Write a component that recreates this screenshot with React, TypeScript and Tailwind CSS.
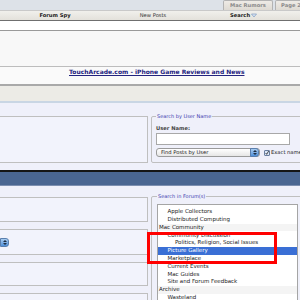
import React from 'react';

const forums: { label: string; level: 0 | 1 | 2; selected?: boolean }[] = [
  { label: 'Apple Collectors', level: 1 },
  { label: 'Distributed Computing', level: 1 },
  { label: 'Mac Community', level: 0 },
  { label: 'Community Discussion', level: 1 },
  { label: 'Politics, Religion, Social Issues', level: 2 },
  { label: 'Picture Gallery', level: 1, selected: true },
  { label: 'Marketplace', level: 1 },
  { label: 'Current Events', level: 1 },
  { label: 'Mac Guides', level: 1 },
  { label: 'Site and Forum Feedback', level: 1 },
  { label: 'Archive', level: 0 },
  { label: 'Wasteland', level: 1 },
];

const Stepper = () => (
  <div className="w-[9px] h-[9px] rounded-r-[3px] bg-gradient-to-b from-[#a9cdf2] to-[#4f8fd8] border border-[#5a7fae] flex flex-col items-center justify-center gap-[1px]">
    <span className="w-0 h-0 border-l-[2px] border-r-[2px] border-b-[2px] border-l-transparent border-r-transparent border-b-[#1b2b40]" />
    <span className="w-0 h-0 border-l-[2px] border-r-[2px] border-t-[2px] border-l-transparent border-r-transparent border-t-[#1b2b40]" />
  </div>
);

const App: React.FC = () => {
  return (
    <div className="relative w-[300px] h-[300px] overflow-hidden bg-[#eff0fa] font-['DejaVu_Sans',Verdana,sans-serif] text-[#1a1a1a]">
      {/* tab strip */}
      <div className="h-[10px] bg-[#dde2e8] flex items-end pl-[223px] gap-[2px]">
        <div className="w-[50px] h-[10px] shrink-0 rounded-t-[2px] border border-b-0 border-[#b3b3b3] bg-gradient-to-b from-[#eeebe6] to-[#dedad3] flex items-center justify-center text-[5.2px] font-bold text-[#8a8a8a] leading-none">Mac Rumors</div>
        <div className="w-[50px] h-[10px] shrink-0 rounded-t-[2px] border border-b-0 border-[#b3b3b3] bg-gradient-to-b from-[#eeebe6] to-[#dedad3] flex items-center pl-[5px] text-[5.2px] font-bold text-[#8a8a8a] leading-none">Page 2</div>
      </div>

      {/* nav bar */}
      <div className="h-[11px] bg-gradient-to-b from-[#f1f0ec] to-[#e3e1db] border-t border-[#c9c9c9] border-b border-b-[#6f6f6f] flex items-center text-[5.2px] leading-none">
        <span className="w-[110px] text-center font-bold">Forum Spy</span>
        <span className="w-[86px] text-center text-[#333]">New Posts</span>
        <span className="pl-[34px] font-bold flex items-center gap-[1px]">
          Search
          <svg width="6" height="5" viewBox="0 0 6 5"><path d="M0.5 1 L5.5 1 L3 4 Z" fill="#dbe6f5" stroke="#6f8fba" strokeWidth="0.6" /></svg>
        </span>
      </div>

      {/* header area */}
      <div className="h-[10px] bg-white border-b border-[#9a9a9a]" />
      <div className="h-[36px] bg-[#f8f8f8] border-b border-[#bdbdbd]" />
      <div className="h-[19px] bg-[#fafafa] border-b-2 border-[#a9a9a9] pl-[69px] pt-[2px] text-[6px] leading-none">
        <span className="font-bold text-[#23237f] underline">TouchArcade.com - iPhone Game Reviews and News</span>
      </div>
      <div className="h-[17px] bg-[#ecebe6] border-b-2 border-[#c9d6e4]" />

      {/* upper search panels */}
      <div className="pt-[13px] flex gap-[3px] h-[60px]">
        <div className="w-[148px] shrink-0 h-[47px] border border-l-0 border-[#bfbfbf] bg-[#f2f3fc]" />
        <fieldset className="w-[170px] shrink-0 h-[49px] border border-[#bfbfbf] rounded-[2px] px-[4px] -mt-[2px]">
          <legend className="text-[5px] text-[#3a3aae] px-[1px] leading-none">Search by User Name</legend>
          <div className="text-[5.2px] font-bold text-[#444] leading-none mt-[7px]">User Name:</div>
          <div className="mt-[2px] w-[134px] h-[12px] bg-white border border-[#a8a8a8]" />
          <div className="mt-[3px] flex items-center gap-[4px]">
            <div className="w-[104px] h-[9px] flex items-center rounded-[3px] border border-[#9a9a9a] bg-gradient-to-b from-white to-[#e6e6e6]">
              <span className="flex-1 pl-[4px] text-[5.2px] leading-none">Find Posts by User</span>
              <Stepper />
            </div>
            <div className="flex items-center gap-[1px]">
              <div className="w-[6px] h-[6px] border border-[#6a7fa0] bg-[#dbe7f7] rounded-[1px] flex items-center justify-center">
                <svg width="6" height="6" viewBox="0 0 6 6"><path d="M1 3 L2.5 5 L5.5 0" fill="none" stroke="#111" strokeWidth="1.1" /></svg>
              </div>
              <span className="text-[5.2px] leading-none whitespace-nowrap">Exact name</span>
            </div>
          </div>
        </fieldset>
      </div>

      {/* blue bar */}
      <div className="mt-[7px] h-[2px] bg-[#151515]" />
      <div className="h-[14px] bg-[#4a6691] border-b border-[#7d8fb0]" />

      {/* lower search panels */}
      <div className="pt-[11px] flex gap-[3px]">
        <div className="w-[148px] shrink-0 flex flex-col gap-[7px]">
          <div className="h-[25px] border border-l-0 border-[#bfbfbf] bg-[#f2f3fc]" />
          <div className="h-[26px] border border-l-0 border-[#bfbfbf] bg-[#f2f3fc] pt-[8px]">
            <Stepper />
          </div>
          <div className="h-[24px] border border-l-0 border-[#bfbfbf] bg-[#f2f3fc]" />
          <div className="h-[25px] border border-l-0 border-[#bfbfbf] bg-[#f2f3fc]" />
        </div>
        <fieldset className="w-[170px] shrink-0 border border-[#bfbfbf] rounded-[2px] pl-[5px] -mt-[3px] h-[120px]">
          <legend className="text-[5px] text-[#3a3aae] px-[1px] leading-none">Search in Forum(s)</legend>
          <div className="mt-[5px] w-[141px] border border-[#a5a5a5] bg-white pt-[3px]">
            {forums.map((f) => (
              <div
                key={f.label}
                className={`h-[7.8px] flex items-center text-[5.5px] leading-none whitespace-nowrap ${
                  f.selected ? 'bg-[#3a6fd5] text-white' : f.level === 0 ? 'bg-[#f4f4f4]' : ''
                } ${f.level === 0 ? 'pl-[1px]' : f.level === 1 ? 'pl-[9.5px]' : 'pl-[17px]'}`}
              >
                {f.label}
              </div>
            ))}
          </div>
        </fieldset>
      </div>

      {/* annotation highlight */}
      <div className="absolute left-[147px] top-[232px] w-[130px] h-[32px] border-[3px] border-[#ff0000]" />
    </div>
  );
};

export default App;
